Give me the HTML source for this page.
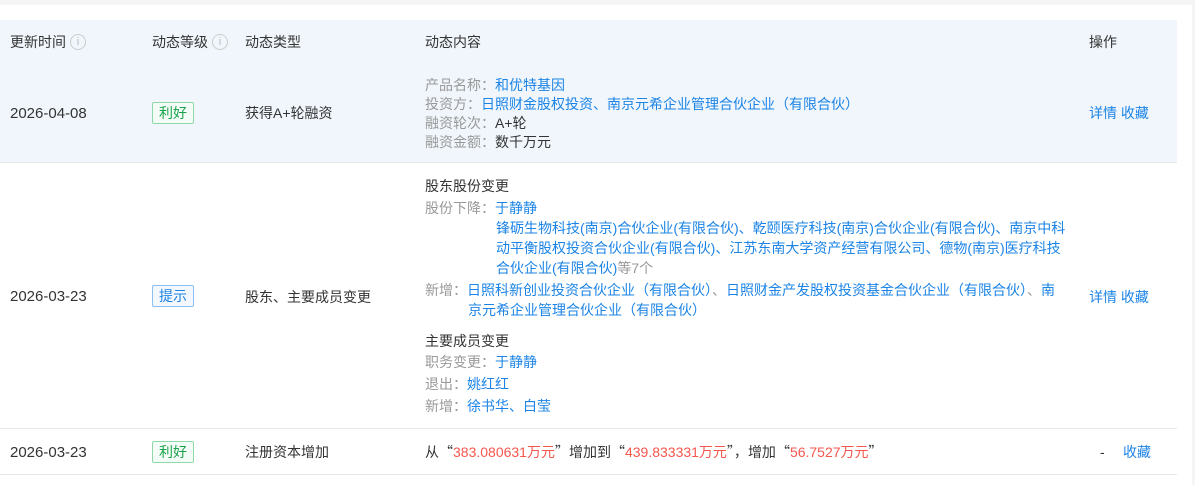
<!DOCTYPE html>
<html><head><meta charset="utf-8"><style>
*{margin:0;padding:0;box-sizing:border-box}
body{width:1195px;height:476px;overflow:hidden;background:#f5f5f5;font-family:"Liberation Sans","Noto Sans CJK SC",sans-serif;font-size:14px;color:#333;position:relative}
.panel{position:absolute;left:0;top:5px;width:1192px;height:480px;background:#fff}
.a{position:absolute;white-space:nowrap;line-height:19px}
.hdr{position:absolute;left:0;top:20px;width:1177px;height:45px;background:#f0f6fc}
.r1{position:absolute;left:0;top:65px;width:1177px;height:98px;background:#f0f6fc;border-bottom:1px solid #e8e8e8}
.line{position:absolute;left:0;width:1177px;height:1px;background:#e8e8e8}
.g{color:#999}.b{color:#1c84e6}.r{color:#f5564e}
.q{font-family:"Noto Sans CJK SC",sans-serif}
.d{font-size:15px}
.badge{position:absolute;height:22px;line-height:20px;padding:0 6px;border:1px solid;border-radius:2px;font-size:14px}
.gr{color:#1aa34a;border-color:#8fd9a8;background:#f3fcf6}
.bl{color:#1c84e6;border-color:#8cc0f2;background:#f3f8fe}
.i{position:absolute;top:34px;width:16px;height:16px;border:1px solid #ccc;border-radius:50%;color:#bbb;font-size:11px;line-height:14px;text-align:center}
</style></head><body>
<div class="panel"></div>
<div class="hdr"></div>
<div class="r1"></div>
<div class="line" style="top:428px"></div>
<div class="line" style="top:474px"></div>
<div class="a" style="left:10px;top:33px">更新时间</div><div class="i" style="left:70px">i</div>
<div class="a" style="left:152px;top:33px">动态等级</div><div class="i" style="left:212px">i</div>
<div class="a" style="left:245px;top:33px">动态类型</div>
<div class="a" style="left:425px;top:33px">动态内容</div>
<div class="a" style="left:1089px;top:33px">操作</div>

<div class="a d" style="left:10px;top:104px">2026-04-08</div>
<div class="badge gr" style="left:152px;top:102px">利好</div>
<div class="a" style="left:245px;top:104px">获得A+轮融资</div>
<div class="a" style="left:425px;top:76px"><span class="g">产品名称：</span><span class="b">和优特基因</span></div>
<div class="a" style="left:425px;top:95px"><span class="g">投资方：</span><span class="b">日照财金股权投资、南京元希企业管理合伙企业（有限合伙）</span></div>
<div class="a" style="left:425px;top:114px"><span class="g">融资轮次：</span>A+轮</div>
<div class="a" style="left:425px;top:133px"><span class="g">融资金额：</span>数千万元</div>
<div class="a b" style="left:1089px;top:104px">详情 收藏</div>

<div class="a d" style="left:10px;top:287px">2026-03-23</div>
<div class="badge bl" style="left:152px;top:285px">提示</div>
<div class="a" style="left:245px;top:288px">股东、主要成员变更</div>
<div class="a" style="left:425px;top:177px">股东股份变更</div>
<div class="a" style="left:425px;top:199px"><span class="g">股份下降：</span><span class="b">于静静</span></div>
<div class="a b" style="left:496px;top:219px">锋砺生物科技(南京)合伙企业(有限合伙)、乾颐医疗科技(南京)合伙企业(有限合伙)、南京中科</div>
<div class="a b" style="left:496px;top:239px">动平衡股权投资合伙企业(有限合伙)、江苏东南大学资产经营有限公司、德物(南京)医疗科技</div>
<div class="a" style="left:496px;top:259px"><span class="b">合伙企业(有限合伙)</span><span class="g">等7个</span></div>
<div class="a" style="left:425px;top:281px"><span class="g">新增：</span><span class="b">日照科新创业投资合伙企业（有限合伙）</span><span class="g">、</span><span class="b">日照财金产发股权投资基金合伙企业（有限合伙）</span><span class="g">、</span><span class="b">南</span></div>
<div class="a b" style="left:468px;top:301px">京元希企业管理合伙企业（有限合伙）</div>
<div class="a" style="left:425px;top:332px">主要成员变更</div>
<div class="a" style="left:425px;top:353px"><span class="g">职务变更：</span><span class="b">于静静</span></div>
<div class="a" style="left:425px;top:375px"><span class="g">退出：</span><span class="b">姚红红</span></div>
<div class="a" style="left:425px;top:397px"><span class="g">新增：</span><span class="b">徐书华、白莹</span></div>
<div class="a b" style="left:1089px;top:288px">详情 收藏</div>

<div class="a d" style="left:10px;top:443px">2026-03-23</div>
<div class="badge gr" style="left:152px;top:441px">利好</div>
<div class="a" style="left:245px;top:443px">注册资本增加</div>
<div class="a" style="left:425px;top:443px">从<span class="q">“</span><span class="r">383.080631万元</span><span class="q">”</span>增加到<span class="q">“</span><span class="r">439.833331万元</span><span class="q">”，</span>增加<span class="q">“</span><span class="r">56.7527万元</span><span class="q">”</span></div>
<div class="a" style="left:1100px;top:443px">-</div>
<div class="a b" style="left:1123px;top:443px">收藏</div>
</body></html>
